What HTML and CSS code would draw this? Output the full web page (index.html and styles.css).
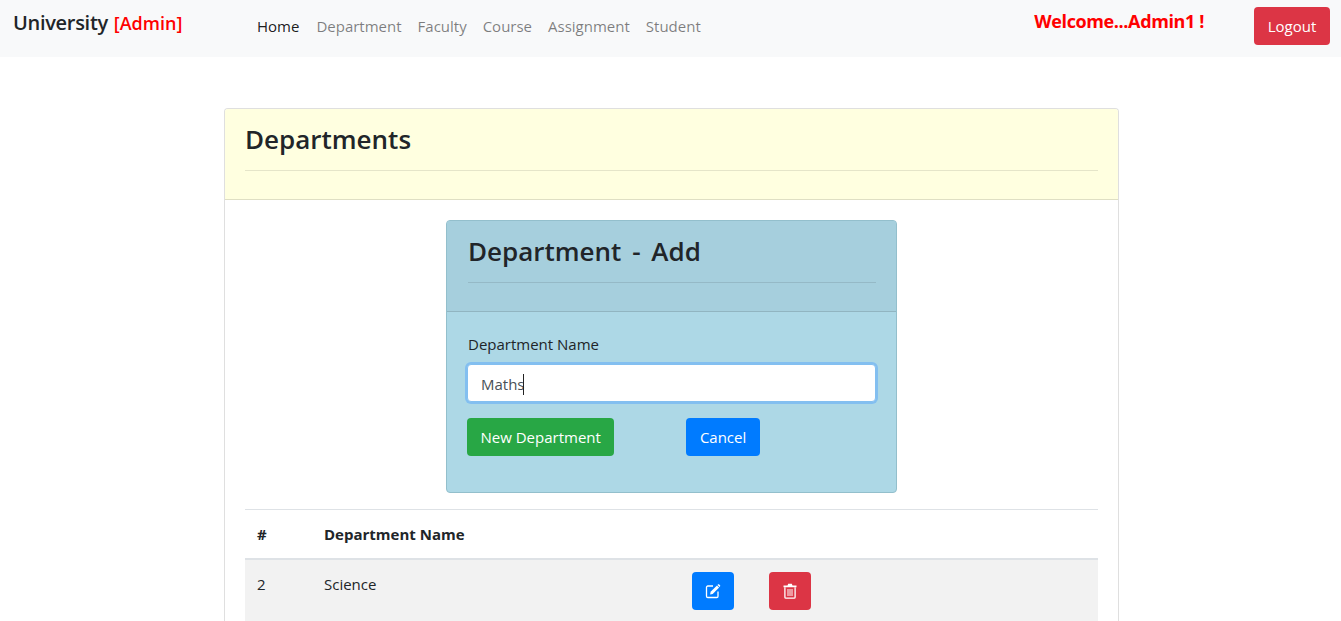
FILE: index.html
```html
<!DOCTYPE html>
<html lang="en">
<head>
    <meta charset="UTF-8">
    <meta name="viewport" content="width=device-width, initial-scale=1.0">
    <title>University</title>
    <link rel="stylesheet" href="styles.css">
</head>
<body>
    <nav class="navbar">
        <div class="brand">University <span class="brand-role">[Admin]</span></div>
        <ul class="nav-links">
            <li class="nav-link active">Home</li>
            <li class="nav-link">Department</li>
            <li class="nav-link">Faculty</li>
            <li class="nav-link">Course</li>
            <li class="nav-link">Assignment</li>
            <li class="nav-link">Student</li>
        </ul>
        <div class="welcome">Welcome...Admin1 !</div>
        <button type="button" class="btn btn-red btn-logout">Logout</button>
    </nav>

    <main class="page">
        <section class="card">
            <div class="card-header header-yellow">
                <h3>Departments</h3>
                <hr class="rule-yellow">
            </div>
            <div class="card-body">
                <div class="form-row">
                    <section class="card card-blue">
                        <div class="card-header header-blue">
                            <h3>Department - Add</h3>
                            <hr class="rule-blue">
                        </div>
                        <form class="form-body">
                            <label class="form-label" for="dept-name">Department Name</label>
                            <div class="fake-input" id="dept-name"><span class="input-text">Maths</span><span class="caret"></span></div>
                            <div class="form-buttons">
                                <button type="button" class="btn btn-green">New Department</button>
                                <button type="button" class="btn btn-blue">Cancel</button>
                            </div>
                        </form>
                    </section>
                </div>

                <table class="dept-table">
                    <thead>
                        <tr>
                            <th class="col-id">#</th>
                            <th class="col-name">Department Name</th>
                            <th></th>
                        </tr>
                    </thead>
                    <tbody>
                        <tr class="row-striped">
                            <td>2</td>
                            <td>Science</td>
                            <td>
                                <div class="row-actions">
                                    <button type="button" class="btn btn-blue btn-icon" aria-label="Edit">
                                        <svg width="16" height="16" viewBox="0 0 16 16" fill="none">
                                            <path d="M8 3H2.8C2.1 3 1.5 3.6 1.5 4.3v9c0 .7.6 1.2 1.3 1.2h9c.7 0 1.2-.5 1.2-1.2V8.5" stroke="#fff" stroke-width="1.3"/>
                                            <path d="M5.6 8.8 12 2.4l2.1 2.1-6.4 6.4-2.6.5z" fill="#fff"/>
                                            <path d="M12.9 1.5c.4-.4 1-.4 1.3 0l.8.8c.4.3.4.9 0 1.3l-.4.4-2.1-2.1z" fill="#fff"/>
                                        </svg>
                                    </button>
                                    <button type="button" class="btn btn-red btn-icon" aria-label="Delete">
                                        <svg width="14" height="16" viewBox="0 0 14 16" fill="none">
                                            <path d="M.5 2.4h4L5.2.8h3.6l.7 1.6h4v1.8H.5z" fill="#fff"/>
                                            <path d="M1.9 4.2v10c0 .6.4 1 1 1h8.2c.6 0 1-.4 1-1v-10" stroke="#fff" stroke-width="1.3"/>
                                            <path d="M5 6v7M7 6v7M9 6v7" stroke="#fff" stroke-width="1"/>
                                        </svg>
                                    </button>
                                </div>
                            </td>
                        </tr>
                    </tbody>
                </table>
            </div>
        </section>
    </main>
</body>
</html>
```

FILE: styles.css
```css
* {
    box-sizing: border-box;
}
body {
    margin: 0;
    font-family: "Open Sans", "Noto Sans", "Liberation Sans", sans-serif;
    font-size: 15px;
    line-height: 1.5;
    color: #212529;
    background-color: #fff;
}

/* navbar */
.navbar {
    display: flex;
    align-items: flex-start;
    height: 57px;
    padding: 7px 11px 0 13px;
    background-color: #f8f9fa;
}
.brand {
    width: 244px;
    font-size: 20px;
    font-weight: 600;
    line-height: 32px;
    letter-spacing: -0.3px;
}
.brand-role {
    margin-left: 1px;
    font-size: 18px;
    letter-spacing: 0;
    color: red;
}
.nav-links {
    display: flex;
    gap: 16px;
    margin: 0;
    padding: 8px 0 0;
    list-style: none;
    flex: 1;
}
.nav-link {
    line-height: 22px;
    color: rgba(0, 0, 0, 0.5);
}
.nav-link.active {
    padding-right: 1px;
    color: rgba(0, 0, 0, 0.9);
}
.welcome {
    margin-right: 50px;
    font-size: 18px;
    font-weight: 700;
    line-height: 28px;
    color: red;
    letter-spacing: -0.38px;
}
.btn {
    display: inline-block;
    height: 38px;
    padding: 0 12.5px;
    border: 1px solid transparent;
    border-radius: 4px;
    font: inherit;
    color: #fff;
}
.btn-logout {
    width: 76px;
    padding: 0;
}
.btn-red {
    background-color: #dc3545;
}
.btn-green {
    background-color: #28a745;
}
.btn-blue {
    background-color: #007bff;
}
.btn-icon {
    display: flex;
    align-items: center;
    justify-content: center;
    width: 42px;
    padding: 0;
}

/* cards */
.page {
    width: 895px;
    margin: 51px 0 0 224px;
}
.card {
    border: 1px solid rgba(0, 0, 0, 0.125);
    border-radius: 4px;
    background-color: #fff;
}
.card-header {
    height: 91px;
    padding: 12px 20px 0;
    border-bottom: 1px solid rgba(0, 0, 0, 0.125);
}
.card-header h3 {
    margin: 0;
    font-size: 26px;
    font-weight: 600;
    line-height: 36px;
}
.card-header hr {
    height: 1px;
    margin: 13px 0 0;
    border: 0;
}
.header-yellow {
    background-color: lightyellow;
    border-radius: 3px 3px 0 0;
}
.rule-yellow {
    background-color: rgba(0, 0, 0, 0.1);
}
.header-blue {
    padding-left: 21px;
    background-color: #a6cfdd;
    border-radius: 3px 3px 0 0;
}
.header-blue h3 {
    word-spacing: 4px;
}
.rule-blue {
    background-color: rgba(0, 0, 0, 0.1);
}
.card-body {
    padding: 20px 20px 20px;
}
.form-row {
    display: flex;
    justify-content: center;
}
.card-blue {
    width: 451px;
    height: 273px;
    background-color: lightblue;
    border-color: #93bfcc;
}
.form-body {
    padding: 20px 20px 0;
}
.form-label {
    display: block;
    margin-bottom: 8px;
    padding-left: 1px;
    line-height: 24px;
}
.fake-input {
    display: flex;
    align-items: center;
    height: 38px;
    padding: 2px 13px 0;
    background-color: #fff;
    border: 1px solid #83bff0;
    border-radius: 4px;
    box-shadow: 0 0 0 2px #83bff0;
    color: #495057;
}
.caret {
    width: 1px;
    height: 21px;
    margin-left: -2px;
    background-color: #222;
}
.form-buttons {
    display: flex;
    gap: 72px;
    margin-top: 16px;
}

/* table */
.dept-table {
    width: 100%;
    margin-top: 16px;
    border-collapse: collapse;
}
.dept-table th {
    height: 49px;
    padding: 1px 12px 0;
    text-align: left;
    font-size: 15px;
    font-weight: 700;
    border-top: 1px solid #dee2e6;
    border-bottom: 2px solid #dee2e6;
}
.dept-table td {
    padding: 13px 12px 12px;
    vertical-align: top;
}
.col-id {
    width: 67px;
}
.col-name {
    width: 368px;
}
.row-striped {
    background-color: #f2f2f2;
}
.row-actions {
    display: flex;
    gap: 35px;
    margin-top: -1px;
}
```
